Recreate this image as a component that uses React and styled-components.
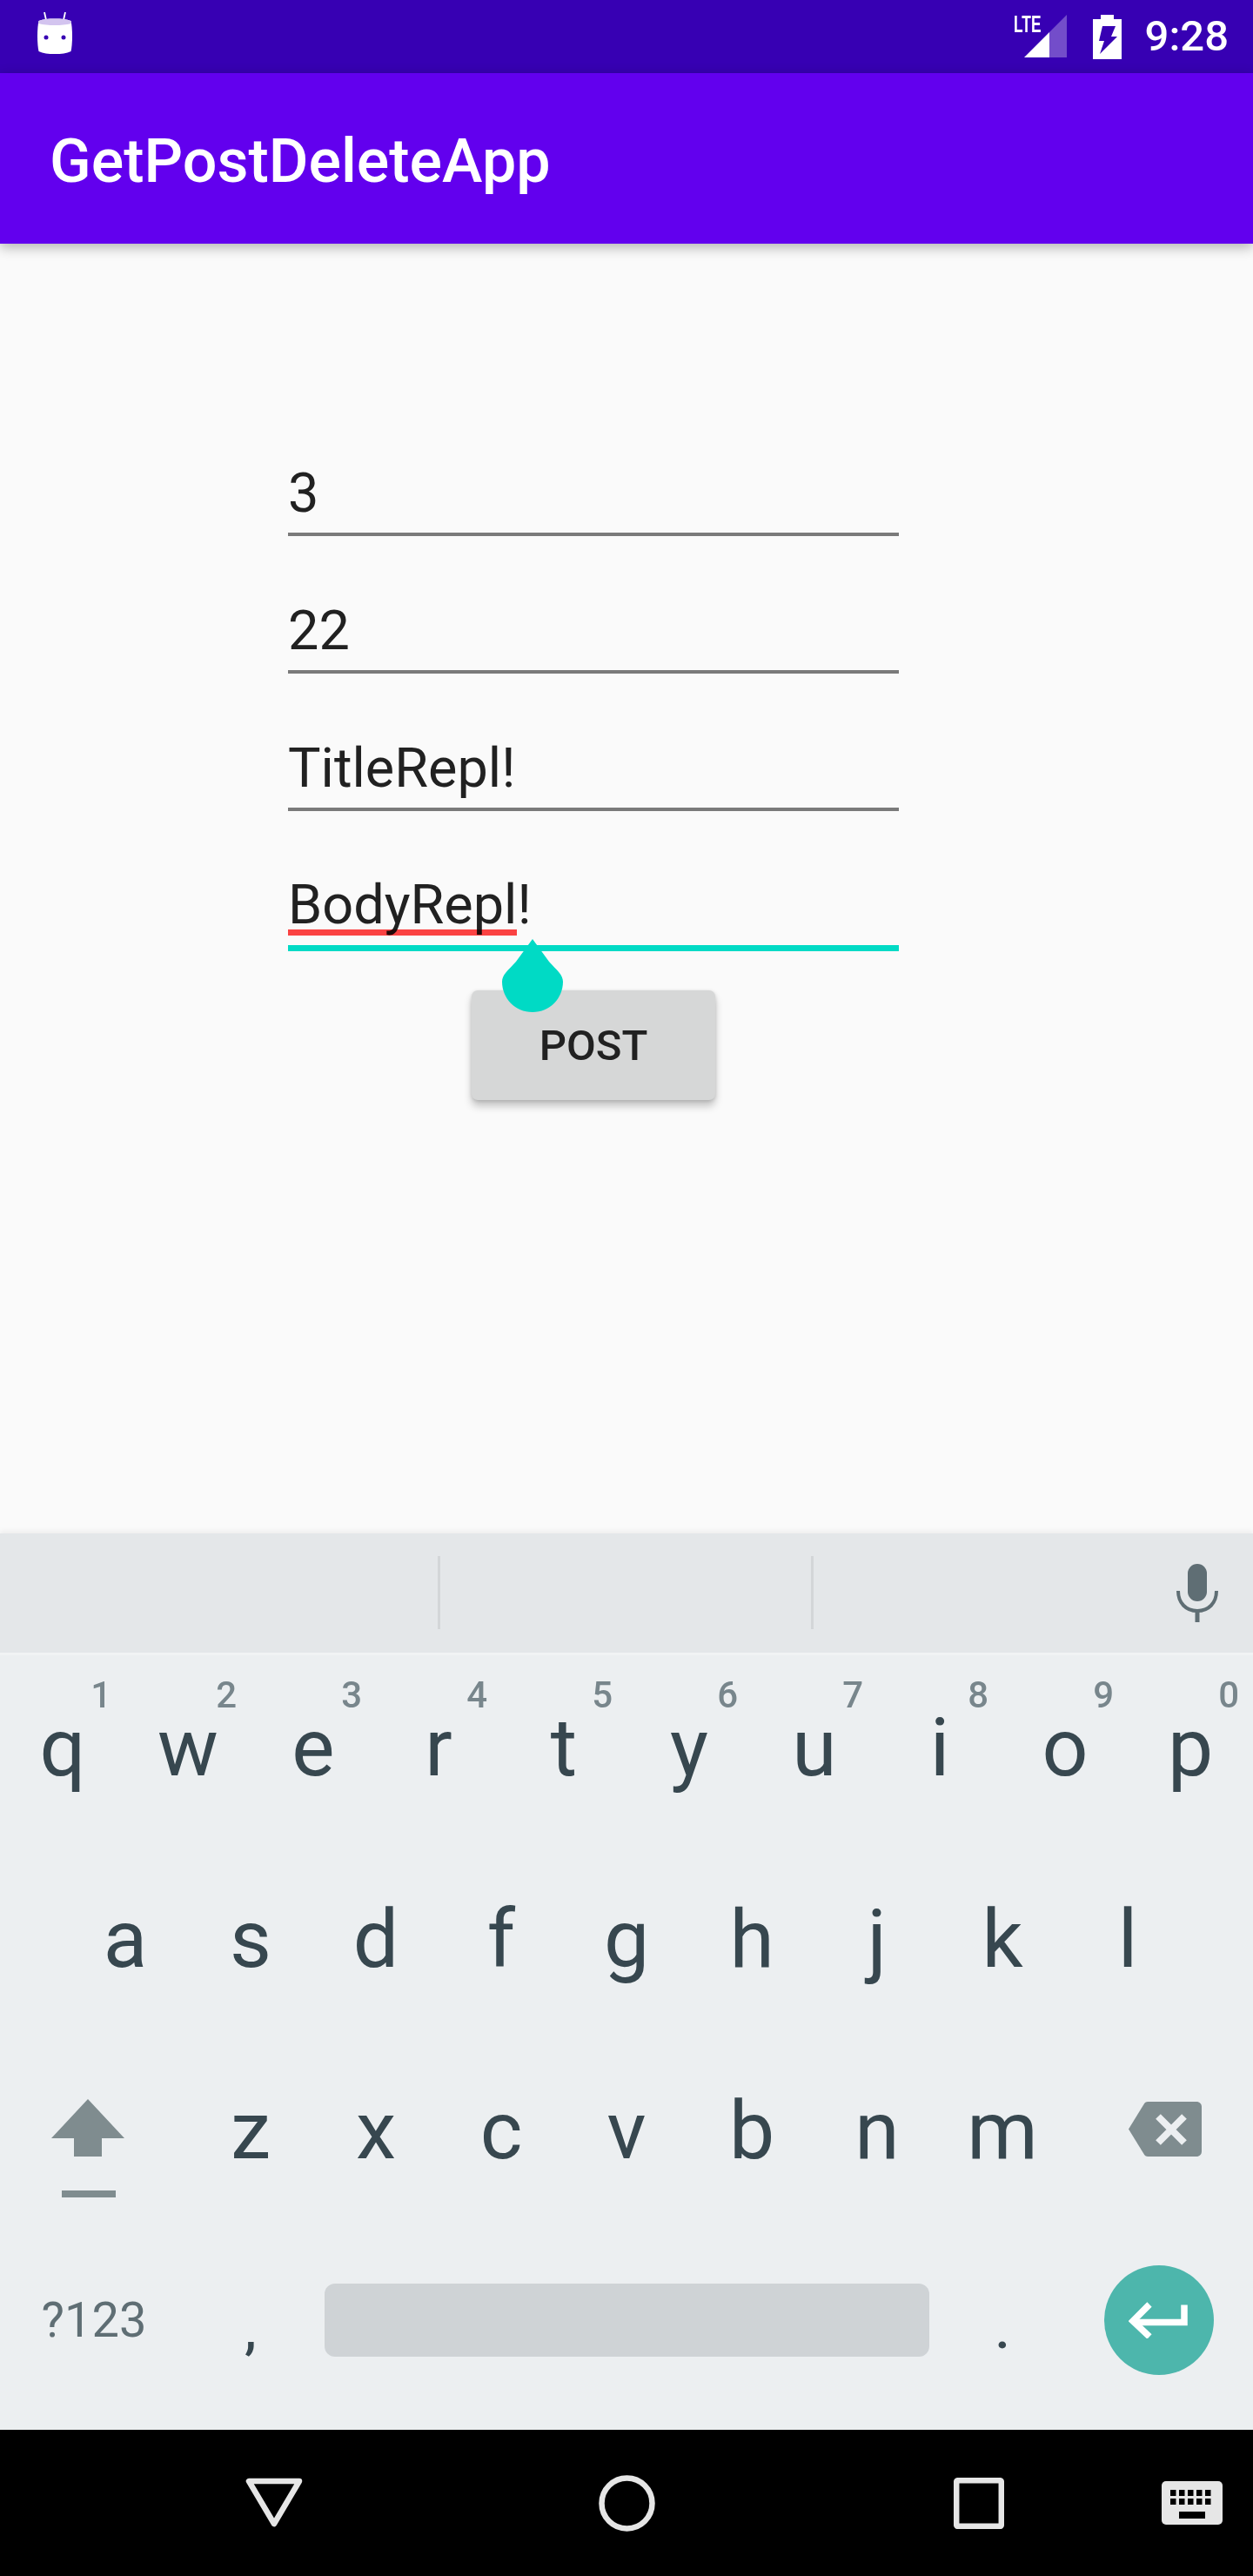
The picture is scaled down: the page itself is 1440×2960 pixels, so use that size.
import React from "react";
import styled, { createGlobalStyle } from "styled-components";

const Global = createGlobalStyle`
  html, body {
    margin: 0;
    padding: 0;
    background: #fafafa;
  }
  * {
    box-sizing: border-box;
  }
`;

const Screen = styled.div`
  width: 1440px;
  height: 2960px;
  display: flex;
  flex-direction: column;
  overflow: hidden;
  background: #fafafa;
  font-family: Roboto, "Liberation Sans", sans-serif;
`;

const StatusBar = styled.div`
  height: 84px;
  flex: none;
  display: flex;
  align-items: center;
  padding: 0 28px 0 43px;
  background: #3700b3;
`;

const StatusRight = styled.div`
  margin-left: auto;
  display: flex;
  align-items: center;
`;

const SignalWrap = styled.div`
  position: relative;
  width: 61px;
  height: 49px;
  margin-top: -1px;
`;

const Lte = styled.span`
  position: absolute;
  left: 0;
  top: 0;
  font-family: "Liberation Sans", sans-serif;
  font-size: 28px;
  line-height: 22px;
  font-weight: 700;
  color: #fff;
  transform: scaleX(0.62);
  transform-origin: left top;
`;

const Clock = styled.span`
  margin-left: 27px;
  font-size: 49px;
  font-weight: 500;
  line-height: 84px;
  color: #fff;
`;

const AppBar = styled.header`
  height: 196px;
  flex: none;
  display: flex;
  align-items: center;
  padding: 6px 0 0 57px;
  background: #6200ee;
  box-shadow: 0 4px 14px rgba(0, 0, 0, 0.3);
  position: relative;
  z-index: 1;
`;

const AppTitle = styled.h1`
  margin: 0;
  font-size: 70px;
  font-weight: 500;
  color: #fff;
  line-height: 1;
`;

const Content = styled.main`
  flex: 1;
  padding: 178px 0 0 331px;
`;

const Form = styled.div`
  width: 702px;
  display: flex;
  flex-direction: column;
  align-items: center;
`;

const Field = styled.div`
  position: relative;
  width: 100%;
  height: ${(p) => (p.$focused ? 161 : 158)}px;
  display: flex;
  align-items: flex-end;
  padding-bottom: ${(p) => (p.$focused ? 9 : 8)}px;
  font-size: 63px;
  line-height: 74px;
  color: #212121;
  border-bottom: ${(p) => (p.$focused ? "7px solid #00dac5" : "4px solid #7a7a7a")};
`;

const SpellMark = styled.div`
  position: absolute;
  left: 0;
  bottom: 11px;
  width: 263px;
  height: 7px;
  background: #ff4343;
  mix-blend-mode: multiply;
`;

const Handle = styled.svg`
  position: absolute;
  left: 246px;
  bottom: -77px;
  z-index: 2;
`;

const PostButton = styled.button`
  width: 280px;
  height: 126px;
  margin-top: 45px;
  padding: 0;
  border: 0;
  border-radius: 7px;
  background: #d6d7d7;
  color: #212121;
  font-family: Roboto, "Liberation Sans", sans-serif;
  font-size: 49px;
  font-weight: 500;
  box-shadow: 0 7px 10px rgba(0, 0, 0, 0.22), 0 1px 4px rgba(0, 0, 0, 0.14);
`;

const Keyboard = styled.section`
  flex: none;
  height: 1030px;
  display: flex;
  flex-direction: column;
  background: #eceff1;
`;

const SuggestionStrip = styled.div`
  height: 137px;
  flex: none;
  display: flex;
  align-items: center;
  background: #e4e7e9;
  margin-bottom: 3px;
  box-shadow: 0 3px 0 #f1f3f4, 0 -3px 6px rgba(0, 0, 0, 0.05);
`;

const Suggestion = styled.div`
  width: ${(p) => p.$w}px;
  height: 84px;
  margin-top: -1px;
  border-right: 3px solid #d3d6d8;
`;

const MicWrap = styled.div`
  margin-left: auto;
  margin-right: 40px;
  display: flex;
`;

const KeyRow = styled.div`
  display: flex;
  height: ${(p) => p.$h || 220}px;
  padding-left: ${(p) => p.$offset || 0}px;
`;

const Key = styled.div`
  position: relative;
  width: ${(p) => p.$w || 144}px;
  flex: none;
  display: flex;
  align-items: center;
  justify-content: center;
  padding: ${(p) => p.$pad || "0 0 8px"};
  font-size: 93px;
  line-height: 1;
  color: #37474f;
`;

const Hint = styled.span`
  position: absolute;
  right: 16px;
  top: 25px;
  font-size: 42px;
  font-weight: 500;
  line-height: 1;
  color: #78868c;
`;

const SymbolKeyLabel = styled.span`
  font-size: 56px;
  color: #5f6e74;
`;

const PunctuationLabel = styled.span`
  font-size: 62px;
  font-weight: 500;
  color: #37474f;
`;

const SpaceBar = styled.div`
  width: 695px;
  height: 84px;
  border-radius: 12px;
  background: #cfd3d6;
`;

const EnterCircle = styled.div`
  width: 126px;
  height: 126px;
  border-radius: 50%;
  display: flex;
  align-items: center;
  justify-content: center;
  background: #4db6ac;
`;

const NavBar = styled.nav`
  flex: none;
  height: 168px;
  position: relative;
  display: flex;
  align-items: center;
  background: #000;
`;

const NavSlot = styled.div`
  width: ${(p) => p.$w}px;
  flex: none;
  display: flex;
  justify-content: center;
`;

const ImeSwitch = styled.div`
  position: absolute;
  right: 35px;
  top: 59px;
`;

const row1 = [
  ["q", "1"],
  ["w", "2"],
  ["e", "3"],
  ["r", "4"],
  ["t", "5"],
  ["y", "6"],
  ["u", "7"],
  ["i", "8"],
  ["o", "9"],
  ["p", "0"],
];
const row2 = ["a", "s", "d", "f", "g", "h", "j", "k", "l"];
const row3 = ["z", "x", "c", "v", "b", "n", "m"];

const AndroidHead = () => (
  <svg width="40" height="48" viewBox="0 0 40 48" style={{ display: "block", marginTop: "-8px" }}>
    <path d="M8 0l2 9M32 0l-2 9" stroke="#fff" strokeWidth="1.800" />
    <path d="M1.500 10c5-2 11-2.500 18.500-2.500S33.500 8 38.500 10c2 8 2 27 0 35-5 2.500-11 3-18.500 3s-13.500-.5-18.500-3c-2-8-2-27 0-35z" fill="#fff" />
    <path d="M1.500 10c5-2 11-2.500 18.500-2.500S33.500 8 38.500 10l.5 3c-6 1.500-12 2-19 2s-13-.5-19-2z" fill="#d3c4ef" />
    <circle cx="10" cy="29" r="2.500" fill="#3700b3" />
    <circle cx="30" cy="29" r="2.500" fill="#3700b3" />
  </svg>
);

const SignalIcon = () => (
  <svg width="49" height="49" viewBox="0 0 49 49" style={{ position: "absolute", left: "12px", top: "0" }}>
    <path d="M29 20L49 0v49H29z" fill="#fff" fillOpacity="0.3" />
    <path d="M0 49l29-29v29z" fill="#fff" />
  </svg>
);

const BatteryIcon = () => (
  <svg width="33" height="51" viewBox="0 0 33 51" style={{ display: "block", marginLeft: "30px" }}>
    <path
      fillRule="evenodd"
      fill="#fff"
      d="M9 0h15v5h9v46H0V5h9zM11 13h15l-5 12h7L8 45l5-15H7z"
    />
  </svg>
);

const MicIcon = () => (
  <svg width="48" height="67" viewBox="0 0 48 67" style={{ display: "block" }}>
    <rect x="13" y="0" width="22" height="43" rx="11" fill="#5f6e74" />
    <path d="M2 31c0 14 9 23 22 23s22-9 22-23" fill="none" stroke="#5f6e74" strokeWidth="4" />
    <rect x="21.500" y="52" width="5" height="15" fill="#5f6e74" />
  </svg>
);

const ShiftIcon = () => (
  <svg width="84" height="113" viewBox="0 0 84 113" style={{ display: "block" }}>
    <path d="M42 0l42 45H58v21H26V45H0z" fill="#7f8c8f" />
    <rect x="12" y="105" width="62" height="8" fill="#7f8c8f" />
  </svg>
);

const BackspaceIcon = () => (
  <svg width="84" height="63" viewBox="0 0 84 63" style={{ display: "block" }}>
    <path
      d="M22 0h56c3.500 0 6 2.500 6 6v51c0 3.500-2.500 6-6 6H22c-1.500 0-3-.8-4-2.200L0 31.500 18 2.200C19 .8 20.500 0 22 0z"
      fill="#7f8c8f"
    />
    <path d="M34 17l30 30M64 17L34 47" stroke="#eceff1" strokeWidth="8" fill="none" />
  </svg>
);

const EnterIcon = () => (
  <svg width="68" height="42" viewBox="0 0 68 42" style={{ display: "block", marginLeft: "-3px" }}>
    <path d="M64 3.500v20H6" fill="none" stroke="#fff" strokeWidth="7.500" />
    <path d="M24 3L5 22l19 18" fill="none" stroke="#fff" strokeWidth="7.500" />
  </svg>
);

const BackIcon = () => (
  <svg width="66" height="58" viewBox="0 0 66 58" style={{ display: "block" }}>
    <path d="M4 4h58L33 53z" fill="none" stroke="#e6e6e6" strokeWidth="6.500" strokeLinejoin="round" />
  </svg>
);

const HomeIcon = () => (
  <svg width="65" height="65" viewBox="0 0 65 65" style={{ display: "block" }}>
    <circle cx="32.500" cy="32.500" r="29" fill="none" stroke="#e6e6e6" strokeWidth="6.500" />
  </svg>
);

const RecentIcon = () => (
  <svg width="58" height="59" viewBox="0 0 58 59" style={{ display: "block" }}>
    <rect x="3.200" y="3.200" width="51.600" height="52.600" rx="1.500" fill="none" stroke="#e6e6e6" strokeWidth="6.500" />
  </svg>
);

const KeyboardIcon = () => (
  <svg width="70" height="50" viewBox="0 0 70 50" style={{ display: "block" }}>
    <rect width="70" height="50" rx="5" fill="#e6e6e6" />
    {[11, 21].map((y) =>
      [10, 20, 30, 40, 50].map((x) => <rect key={`${x}-${y}`} x={x} y={y - 1} width="6.500" height="7" fill="#000" />)
    )}
    <rect x="20" y="35" width="30" height="8" fill="#000" />
  </svg>
);

const Handleshape = () => (
  <Handle width="70" height="84" viewBox="0 0 70 84">
    <path d="M35 0l19 26c9 10 16 15 16 23 0 19-15 35-35 35S0 68 0 49c0-8 7-13 16-23z" fill="#00dac5" />
  </Handle>
);

export default function App() {
  return (
    <Screen>
      <Global />
      <StatusBar>
        <AndroidHead />
        <StatusRight>
          <SignalWrap>
            <Lte>LTE</Lte>
            <SignalIcon />
          </SignalWrap>
          <BatteryIcon />
          <Clock>9:28</Clock>
        </StatusRight>
      </StatusBar>
      <AppBar>
        <AppTitle>GetPostDeleteApp</AppTitle>
      </AppBar>
      <Content>
        <Form>
          <Field>3</Field>
          <Field>22</Field>
          <Field>TitleRepl!</Field>
          <Field $focused>
            BodyRepl!
            <SpellMark />
            <Handleshape />
          </Field>
          <PostButton>POST</PostButton>
        </Form>
      </Content>
      <Keyboard>
        <SuggestionStrip>
          <Suggestion $w={506} />
          <Suggestion $w={429} />
          <MicWrap>
            <MicIcon />
          </MicWrap>
        </SuggestionStrip>
        <KeyRow>
          {row1.map(([letter, hint]) => (
            <Key key={letter}>
              {letter}
              <Hint>{hint}</Hint>
            </Key>
          ))}
        </KeyRow>
        <KeyRow $offset={72}>
          {row2.map((letter) => (
            <Key key={letter}>{letter}</Key>
          ))}
        </KeyRow>
        <KeyRow>
          <Key $w={216} $pad="32px 14px 0 0">
            <ShiftIcon />
          </Key>
          {row3.map((letter) => (
            <Key key={letter}>{letter}</Key>
          ))}
          <Key $w={216} $pad="0 0 12px 14px">
            <BackspaceIcon />
          </Key>
        </KeyRow>
        <KeyRow $h={230}>
          <Key $w={216} $pad="0 0 22px">
            <SymbolKeyLabel>?123</SymbolKeyLabel>
          </Key>
          <Key $pad="0">
            <PunctuationLabel>,</PunctuationLabel>
          </Key>
          <Key $w={720} $pad="0 0 22px">
            <SpaceBar />
          </Key>
          <Key $pad="0">
            <PunctuationLabel>.</PunctuationLabel>
          </Key>
          <Key $w={216} $pad="0 0 22px">
            <EnterCircle>
              <EnterIcon />
            </EnterCircle>
          </Key>
        </KeyRow>
      </Keyboard>
      <NavBar>
        <NavSlot $w={630}>
          <BackIcon />
        </NavSlot>
        <NavSlot $w={180}>
          <HomeIcon />
        </NavSlot>
        <NavSlot $w={630}>
          <RecentIcon />
        </NavSlot>
        <ImeSwitch>
          <KeyboardIcon />
        </ImeSwitch>
      </NavBar>
    </Screen>
  );
}
